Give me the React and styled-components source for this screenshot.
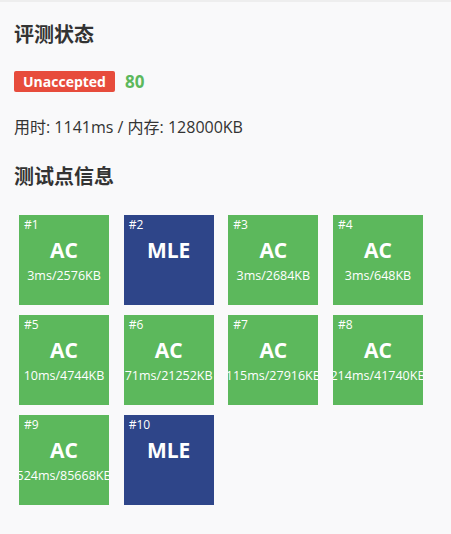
import React from 'react';
import styled, { createGlobalStyle } from 'styled-components';

const GlobalStyle = createGlobalStyle`
  html, body {
    margin: 0;
    padding: 0;
    background: #f9f9fa;
  }
  body {
    font-family: "Open Sans", "Noto Sans CJK SC", sans-serif;
    color: #333;
  }
`;

const Page = styled.div`
  min-height: 534px;
  box-sizing: border-box;
  border-top: 2px solid #eeeeee;
  padding: 18px 14px 20px;
`;

const Heading = styled.h2`
  margin: 0;
  font-size: 20px;
  line-height: 30px;
  font-weight: 700;
  color: #333;
`;

const StatusRow = styled.div`
  display: flex;
  align-items: center;
  gap: 10px;
  margin-top: 20px;
`;

const Badge = styled.span`
  display: inline-block;
  background: #e74c3c;
  color: #fff;
  font-size: 14px;
  font-weight: 700;
  line-height: 21px;
  padding: 0 9px 0;
  border-radius: 2px;
`;

const Score = styled.span`
  color: #5cb85c;
  font-size: 17px;
  font-weight: 700;
`;

const Usage = styled.div`
  margin-top: 22px;
  font-size: 16px;
  line-height: 24px;
  color: #333;
`;

const SubHeading = styled(Heading)`
  margin-top: 23px;
`;

const CaseGrid = styled.div`
  display: grid;
  grid-template-columns: repeat(4, 90px);
  column-gap: 14.67px;
  row-gap: 10px;
  margin-top: 23px;
  padding-left: 5px;
`;

const CaseBox = styled.div`
  position: relative;
  width: 90px;
  height: 90px;
  overflow: hidden;
  background: ${p => (p.$verdict === 'AC' ? '#5cb85c' : '#2e4589')};
  color: #fff;
  display: flex;
  flex-direction: column;
  align-items: center;
`;

const CaseId = styled.span`
  position: absolute;
  top: 2px;
  left: 5px;
  font-size: 12px;
  line-height: 16px;
`;

const Verdict = styled.div`
  margin-top: 21px;
  font-size: 21px;
  line-height: 28px;
  font-weight: 700;
`;

/* long time/memory strings run past the box edges and get clipped */
const Detail = styled.div`
  margin-top: 3px;
  font-size: 12.5px;
  line-height: 18px;
  white-space: nowrap;
`;

const cases = [
  { id: 1, verdict: 'AC', detail: '3ms/2576KB' },
  { id: 2, verdict: 'MLE' },
  { id: 3, verdict: 'AC', detail: '3ms/2684KB' },
  { id: 4, verdict: 'AC', detail: '3ms/648KB' },
  { id: 5, verdict: 'AC', detail: '10ms/4744KB' },
  { id: 6, verdict: 'AC', detail: '71ms/21252KB' },
  { id: 7, verdict: 'AC', detail: '115ms/27916KB' },
  { id: 8, verdict: 'AC', detail: '214ms/41740KB' },
  { id: 9, verdict: 'AC', detail: '524ms/85668KB' },
  { id: 10, verdict: 'MLE' },
];

export default function App() {
  return (
    <>
      <GlobalStyle />
      <Page>
        <Heading>评测状态</Heading>
        <StatusRow>
          <Badge>Unaccepted</Badge>
          <Score>80</Score>
        </StatusRow>
        <Usage>用时: 1141ms / 内存: 128000KB</Usage>
        <SubHeading>测试点信息</SubHeading>
        <CaseGrid>
          {cases.map(c => (
            <CaseBox key={c.id} $verdict={c.verdict}>
              <CaseId>#{c.id}</CaseId>
              <Verdict>{c.verdict}</Verdict>
              {c.detail && <Detail>{c.detail}</Detail>}
            </CaseBox>
          ))}
        </CaseGrid>
      </Page>
    </>
  );
}
